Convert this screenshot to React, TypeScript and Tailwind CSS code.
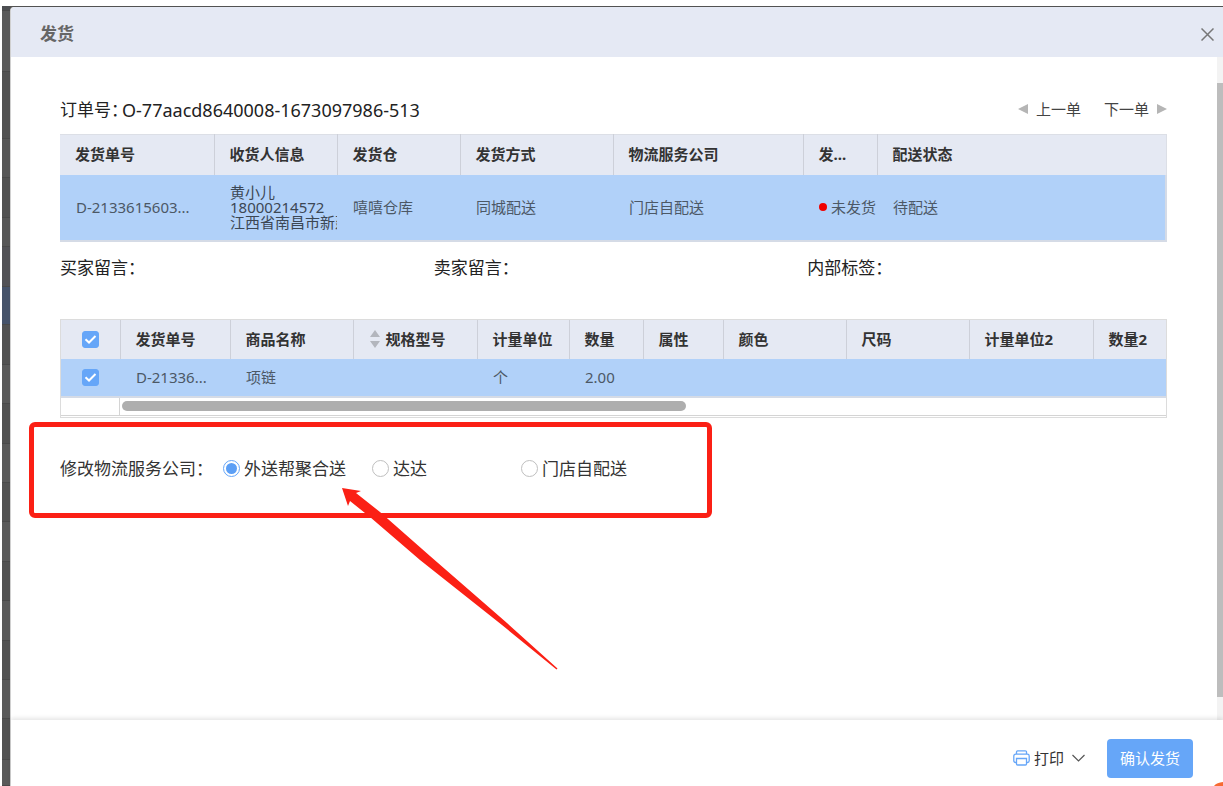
import { useState } from 'react';
import clsx from 'clsx';

const shipmentColumns = [
  { title: '发货单号', width: 'w-[154px]' },
  { title: '收货人信息', width: 'w-[123px]' },
  { title: '发货仓', width: 'w-[123px]' },
  { title: '发货方式', width: 'w-[153px]' },
  { title: '物流服务公司', width: 'w-[190px]' },
  { title: '发...', width: 'w-[74px]' },
  { title: '配送状态', width: '' },
];

const goodsColumns = [
  { title: '发货单号', width: 'w-[110px]', value: 'D-21336...' },
  { title: '商品名称', width: 'w-[123px]', value: '项链' },
  { title: '规格型号', width: 'w-[124px]', value: '', sortable: true },
  { title: '计量单位', width: 'w-[92px]', value: '个' },
  { title: '数量', width: 'w-[74px]', value: '2.00' },
  { title: '属性', width: 'w-[80px]', value: '' },
  { title: '颜色', width: 'w-[123px]', value: '' },
  { title: '尺码', width: 'w-[123px]', value: '' },
  { title: '计量单位2', width: 'w-[124px]', value: '' },
  { title: '数量2', width: '', value: '' },
];

const carriers = [
  { name: '外送帮聚合送', width: 'w-[149px]' },
  { name: '达达', width: 'w-[149px]' },
  { name: '门店自配送', width: '' },
];

// rows of the list page that stays visible behind the dialog
const backdropRows = [
  'h-[5px] bg-[#4d4f52]',
  'h-[61px] bg-[#5a5a5a]',
  'h-[67px] bg-[#525252]',
  'h-[39px] bg-[#575757]',
  'h-[40px] bg-[#525252]',
  'h-[29px] bg-[#575757]',
  'h-[40px] bg-[#525256]',
  'h-[38px] bg-[#46536a]',
  'h-[40px] bg-[#525252]',
  'h-[39px] bg-[#5a5a5a]',
  'h-[40px] bg-[#525252]',
  'h-[39px] bg-[#5a5a5a]',
  'h-[39px] bg-[#525252]',
  'h-[40px] bg-[#5a5a5a]',
  'h-[39px] bg-[#525252]',
  'h-[40px] bg-[#5a5a5a]',
  'h-[39px] bg-[#525252]',
  'h-[39px] bg-[#5a5a5a]',
  'h-[41px] bg-[#525252]',
  'flex-1 bg-[#5a5a5a]',
];

function Checkbox({ label }: { label: string }) {
  const [checked, setChecked] = useState(true);
  return (
    <label className="relative mx-auto block h-[17px] w-[17px]">
      <input
        type="checkbox"
        aria-label={label}
        checked={checked}
        onChange={() => setChecked(!checked)}
        className="block h-[17px] w-[17px] appearance-none rounded-[3px] border border-[#66a6f8] bg-white checked:bg-[#66a6f8]"
      />
      <svg viewBox="0 0 17 17" className="pointer-events-none absolute inset-0" fill="none" stroke="#fff" strokeWidth="2">
        <path d="M3.5 8.2 7 11.5 13.5 5" />
      </svg>
    </label>
  );
}

function SortArrows() {
  return (
    <svg width="10" height="18" viewBox="0 0 10 18" fill="#b3b6bd" className="mr-[6px] ml-px">
      <path d="M5 0 10 7H0zM0 11h10l-5 7z" />
    </svg>
  );
}

function ShipmentTable() {
  return (
    <table className="w-full table-fixed border-collapse text-left text-[15px] leading-[15px]">
      <thead>
        <tr className="h-[40px] border-t border-[#dcdfe6] bg-[#e5e9f3] text-[#333]">
          {shipmentColumns.map((col) => (
            <th
              key={col.title}
              className={clsx('border-r border-[#cdd0d9] pl-[15px] font-bold last:border-[#dcdfe6]', col.width)}
            >
              {col.title}
            </th>
          ))}
        </tr>
      </thead>
      <tbody>
        <tr className="h-[66px] border-r-2 border-b-2 border-[#d5dbe6] bg-[#b1d1f9] whitespace-nowrap text-[#4c5866]">
          <td className="pl-4">D-2133615603...</td>
          <td className="overflow-hidden pl-4 text-[#3c4754]">
            黄小儿
            <br />
            18000214572
            <br />
            江西省南昌市新建
          </td>
          <td className="pl-4">嘻嘻仓库</td>
          <td className="pl-4">同城配送</td>
          <td className="pl-4">门店自配送</td>
          <td className="pl-4">
            <span className="flex items-center gap-1">
              <span className="h-2 w-2 shrink-0 rounded-full bg-[#f00000]" />
              未发货
            </span>
          </td>
          <td className="pl-4">待配送</td>
        </tr>
      </tbody>
    </table>
  );
}

function GoodsTable() {
  return (
    <div className="border border-[#dcdcdc] pb-px">
      <table className="w-full table-fixed border-collapse text-left text-[15px] leading-[15px]">
        <thead>
          <tr className="h-[39px] bg-[#e5e9f3] text-[#333]">
            <th className="w-[59px] border-r border-[#cdd0d9]">
              <Checkbox label="全选" />
            </th>
            {goodsColumns.map((col) => (
              <th
                key={col.title}
                className={clsx('border-r border-[#cdd0d9] pl-[15px] font-bold last:border-r-0', col.width)}
              >
                <span className="flex items-center">
                  {col.sortable && <SortArrows />}
                  {col.title}
                </span>
              </th>
            ))}
          </tr>
        </thead>
        <tbody>
          <tr className="h-[38px] border-b-2 border-[#d5dbe6] bg-[#b1d1f9] whitespace-nowrap text-[#4c5866]">
            <td>
              <Checkbox label="选择商品" />
            </td>
            {goodsColumns.map((col) => (
              <td key={col.title} className="pl-4">
                {col.value}
              </td>
            ))}
          </tr>
        </tbody>
      </table>
      <div className="flex h-[18px] items-center border-b border-[#d4d4d4]">
        <div className="h-full w-[59px] border-r border-[#d4d4d4]" />
        <div className="ml-[2px] h-[10px] w-[51%] rounded-full bg-[#aeaeae]" />
      </div>
    </div>
  );
}

function CarrierPicker() {
  const [carrier, setCarrier] = useState(carriers[0].name);
  return (
    <div className="relative mt-[37px]">
      <div role="radiogroup" aria-labelledby="carrier-label" className="flex h-7 items-center text-[17px] text-[#333]">
        <span id="carrier-label" className="w-[163px]">
          修改物流服务公司：
        </span>
        {carriers.map((item) => (
          <label key={item.name} className={clsx('flex items-center gap-1', item.width)}>
            <input
              type="radio"
              name="carrier"
              checked={carrier === item.name}
              onChange={() => setCarrier(item.name)}
              className="h-[17px] w-[17px] appearance-none rounded-full border border-[#bfbfbf] bg-white bg-clip-content p-[2px] checked:border-[#66a6f8] checked:bg-[#5c9ff5]"
            />
            {item.name}
          </label>
        ))}
      </div>

      {/* highlight frame and pointer drawn over the form */}
      <div className="pointer-events-none absolute -top-[33px] -left-[31px] h-[96px] w-[683px] rounded-[6px] border-[5px] border-[#fb2015]" />
      <svg
        width="216"
        height="184"
        viewBox="0 0 216 184"
        fill="#fb2015"
        className="pointer-events-none absolute top-[33px] left-[282px]"
      >
        <path d="M0 0 19 3 14 5 38 24 88 68 165 135 215.5 180.5 214.5 181.5 160 137 78 72 28 29 8 13 6 18Z" />
      </svg>
    </div>
  );
}

export default function App() {
  return (
    <div className="flex h-screen overflow-hidden bg-white pt-[6px] pl-[2px] font-['Noto_Sans','Noto_Sans_CJK_SC',sans-serif]">
      <div className="relative flex flex-1 bg-[#525252]">
        <div className="flex w-[8px] flex-col overflow-hidden">
          {backdropRows.map((row, i) => (
            <div key={i} className={clsx('shrink-0 border-b border-[#4a4a4a]', row)} />
          ))}
        </div>

        <div className="mt-px flex min-w-0 flex-1 flex-col rounded-tl-[4px] border-l border-[#d0d0d0] bg-white">
          <header className="flex h-[50px] shrink-0 items-center justify-between rounded-tl-[4px] bg-[#e5e9f4] pt-1 pr-[9px] pl-[29px]">
            <h1 className="text-[17px] leading-6 font-bold text-[#666]">发货</h1>
            <button aria-label="关闭">
              <svg width="13" height="13" viewBox="0 0 13 13" stroke="#777" strokeWidth="1.5">
                <path d="M.5.5l12 12M12.5.5l-12 12" />
              </svg>
            </button>
          </header>

          <div className="flex min-h-0 flex-1">
            <main className="min-w-0 flex-1 overflow-hidden pt-10 pr-[50px] pl-[49px]">
              <div className="flex h-[37px] items-start justify-between">
                <p className="flex text-[17px] leading-[26px] text-[#222]">
                  订单号：
                  <span className="-ml-[6px] text-[18px]">O-77aacd8640008-1673097986-513</span>
                </p>
                <div className="flex gap-[23px] text-[15px] leading-6 text-[#444]">
                  <button className="flex items-center gap-2">
                    <svg width="10" height="10" viewBox="0 0 10 10" fill="#b5b5b5">
                      <path d="M10 0v10L0 5z" />
                    </svg>
                    上一单
                  </button>
                  <button className="flex items-center gap-2">
                    下一单
                    <svg width="10" height="10" viewBox="0 0 10 10" fill="#b5b5b5">
                      <path d="M0 0v10l10-5z" />
                    </svg>
                  </button>
                </div>
              </div>

              <ShipmentTable />

              <div className="-mr-[14px] grid h-[77px] grid-cols-3 pt-[13px] text-[17px] leading-[26px] text-[#222]">
                <span>买家留言：</span>
                <span>卖家留言：</span>
                <span>内部标签：</span>
              </div>

              <GoodsTable />
              <CarrierPicker />
            </main>

            <div className="flex w-[6px] flex-col bg-[#f3f3f3] pt-[26px] pb-[23px]">
              <div className="flex-1 bg-[#bdbdbd]" />
            </div>
          </div>

          <footer className="relative flex h-[66px] shrink-0 items-center justify-end gap-[22px] bg-white pt-[10px] pr-[30px] text-[15px] shadow-[0_-2px_4px_rgba(0,0,0,0.1)]">
            <button className="flex items-center text-[#333]">
              <svg width="17" height="16" viewBox="0 0 17 16" fill="none" stroke="#66a6f8" strokeWidth="1.3" className="mr-1">
                <path d="M3.5 4.2V2A1.2 1.2 0 0 1 4.7.8h7.6A1.2 1.2 0 0 1 13.5 2v2.2M3.5 12.5H2.6A1.8 1.8 0 0 1 .8 10.7V6a1.8 1.8 0 0 1 1.8-1.8h11.8A1.8 1.8 0 0 1 16.2 6v4.7a1.8 1.8 0 0 1-1.8 1.8h-.9M3.5 8.5h10V14a1 1 0 0 1-1 1h-8a1 1 0 0 1-1-1z" />
              </svg>
              打印
              <svg width="13" height="8" viewBox="0 0 13 8" fill="none" stroke="#555" strokeWidth="1.2" className="ml-2">
                <path d="M.5 1l6 6 6-6" />
              </svg>
            </button>
            <button className="h-[39px] rounded-[4px] bg-[#66a6f8] px-[13px] text-white">确认发货</button>
          </footer>
        </div>

        {/* edge of the floating help bubble */}
        <svg width="9" height="4" viewBox="0 0 9 4" fill="#f76b32" className="absolute right-0 bottom-0">
          <path d="M0 4C2 1.5 5 .3 9 0v4z" />
        </svg>
      </div>
    </div>
  );
}
